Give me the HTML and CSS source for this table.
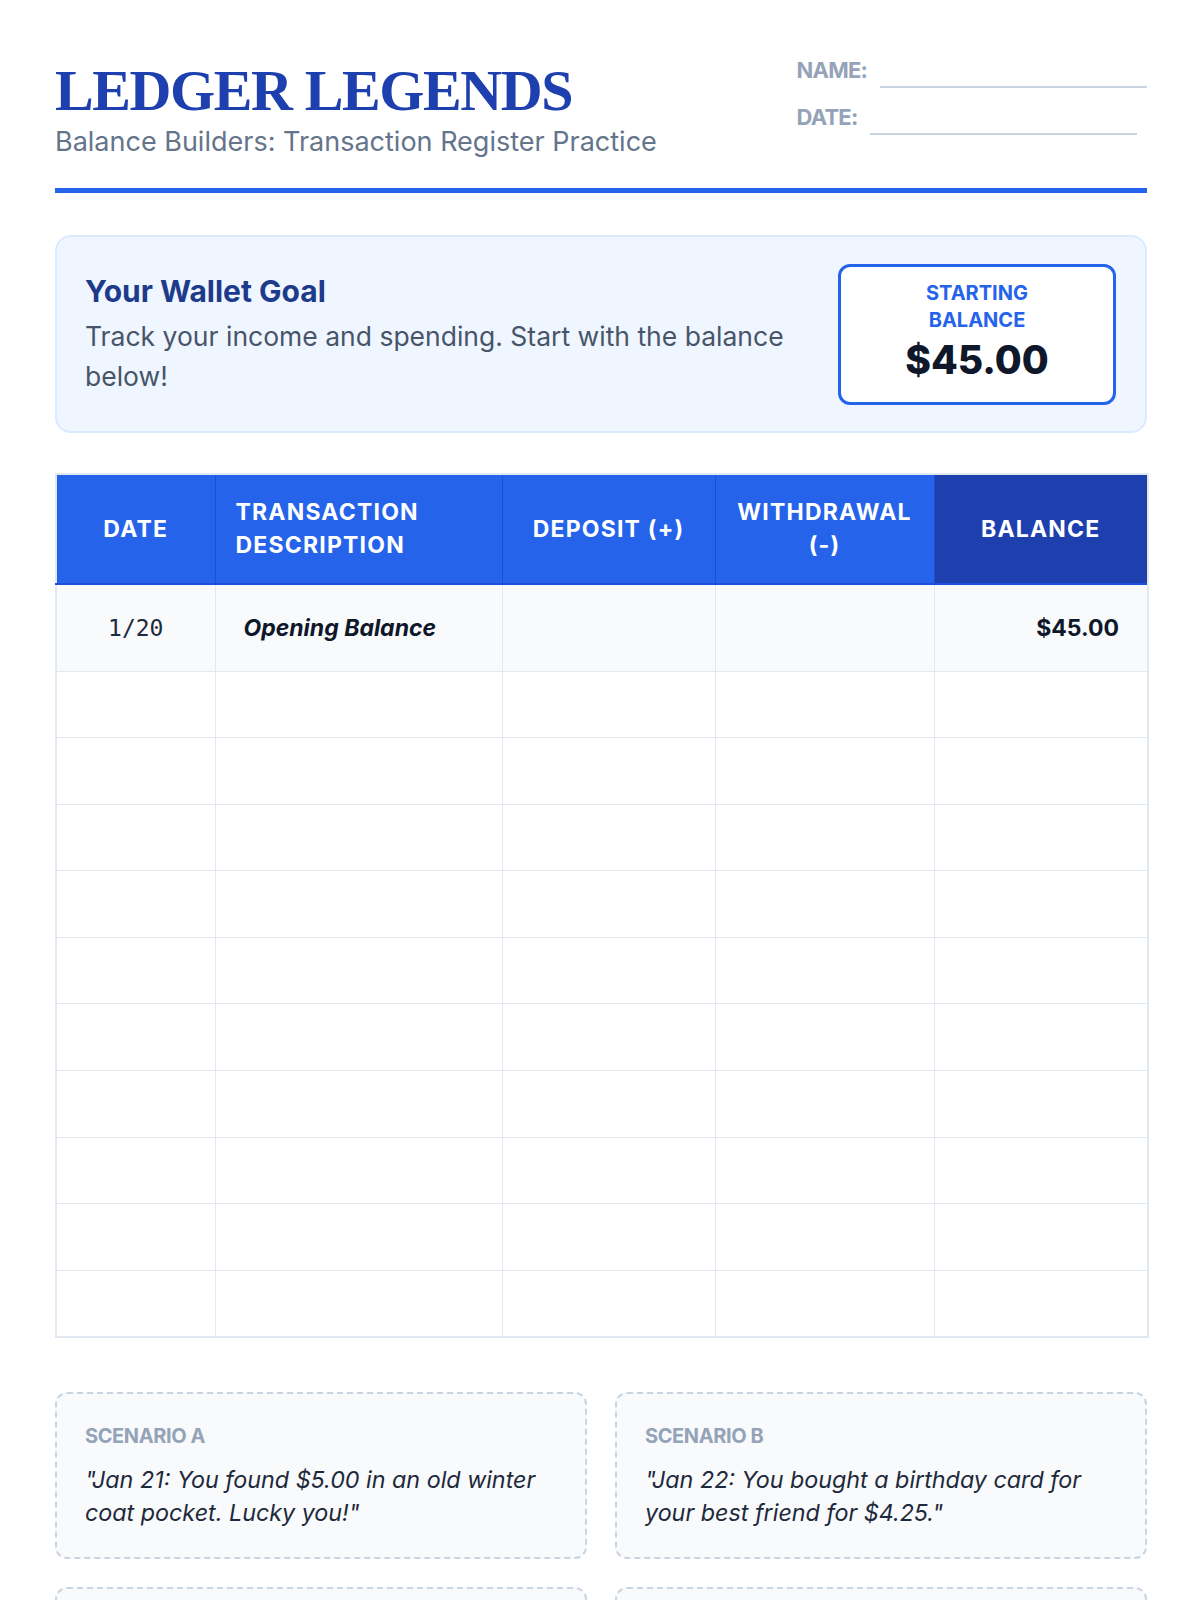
FILE: index.html
```html
<!DOCTYPE html>
<html lang="en">
<head>
<meta charset="utf-8">
<title>Ledger Legends</title>
<link rel="stylesheet" href="styles.css">
</head>
<body>
<div class="page">
  <header class="header">
    <div class="brand">
      <h1 class="title">LEDGER LEGENDS</h1>
      <p class="subtitle">Balance Builders: Transaction Register Practice</p>
    </div>
    <div class="fields">
      <div class="field"><span class="field-label">NAME:</span><span class="field-line"></span></div>
      <div class="field"><span class="field-label">DATE:</span><span class="field-line"></span></div>
    </div>
  </header>

  <section class="goal">
    <div class="goal-text">
      <h2 class="goal-title">Your Wallet Goal</h2>
      <p class="goal-desc">Track your income and spending. Start with the balance below!</p>
    </div>
    <div class="start-box">
      <div class="start-label">STARTING<br>BALANCE</div>
      <div class="start-amount">$45.00</div>
    </div>
  </section>

  <table class="register">
    <colgroup>
      <col class="c-date">
      <col class="c-desc">
      <col class="c-dep">
      <col class="c-wd">
      <col class="c-bal">
    </colgroup>
    <thead>
      <tr>
        <th class="th-center">DATE</th>
        <th class="th-left">TRANSACTION DESCRIPTION</th>
        <th class="th-center">DEPOSIT (+)</th>
        <th class="th-center">WITHDRAWAL (-)</th>
        <th class="th-center th-balance">BALANCE</th>
      </tr>
    </thead>
    <tbody>
      <tr class="row-first">
        <td class="td-date">1/20</td>
        <td class="td-desc">Opening Balance</td>
        <td></td>
        <td></td>
        <td class="td-bal">$45.00</td>
      </tr>
      <tr class="row-empty"><td></td><td></td><td></td><td></td><td></td></tr>
      <tr class="row-empty"><td></td><td></td><td></td><td></td><td></td></tr>
      <tr class="row-empty"><td></td><td></td><td></td><td></td><td></td></tr>
      <tr class="row-empty"><td></td><td></td><td></td><td></td><td></td></tr>
      <tr class="row-empty"><td></td><td></td><td></td><td></td><td></td></tr>
      <tr class="row-empty"><td></td><td></td><td></td><td></td><td></td></tr>
      <tr class="row-empty"><td></td><td></td><td></td><td></td><td></td></tr>
      <tr class="row-empty"><td></td><td></td><td></td><td></td><td></td></tr>
      <tr class="row-empty"><td></td><td></td><td></td><td></td><td></td></tr>
      <tr class="row-empty"><td></td><td></td><td></td><td></td><td></td></tr>
    </tbody>
  </table>

  <section class="scenarios">
    <div class="scenario">
      <div class="scenario-label">SCENARIO A</div>
      <p class="scenario-text">"Jan 21: You found $5.00 in an old winter coat pocket. Lucky you!"</p>
    </div>
    <div class="scenario">
      <div class="scenario-label">SCENARIO B</div>
      <p class="scenario-text">"Jan 22: You bought a birthday card for your best friend for $4.25."</p>
    </div>
    <div class="scenario">
      <div class="scenario-label">SCENARIO C</div>
      <p class="scenario-text">"Jan 23: You earned $12.00 for walking the neighbor's dog."</p>
    </div>
    <div class="scenario">
      <div class="scenario-label">SCENARIO D</div>
      <p class="scenario-text">"Jan 24: You spent $6.50 on a movie snack."</p>
    </div>
  </section>
</div>
</body>
</html>
```
FILE: styles.css
```css
* { box-sizing: border-box; }

html, body {
  margin: 0;
  padding: 0;
  background: #ffffff;
}

body {
  font-family: Inter, "Noto Sans", "Liberation Sans", sans-serif;
  color: #0f172a;
}

.page {
  padding: 60px 53px 40px 55px;
}

/* Header */
.header {
  display: flex;
  justify-content: space-between;
  align-items: flex-start;
  padding-bottom: 30px;
  border-bottom: 5px solid #2563eb;
}

.title {
  margin: 0;
  font-family: "Liberation Serif", "DejaVu Serif", serif;
  font-weight: 700;
  font-size: 58px;
  line-height: 62px;
  color: #1e40af;
  letter-spacing: -1.4px;
}

.subtitle {
  margin: 4px 0 0;
  font-size: 27px;
  line-height: 32px;
  color: #64748b;
}

.fields {
  display: flex;
  flex-direction: column;
  gap: 15px;
  margin-top: -6px;
}

.field {
  display: flex;
  align-items: flex-end;
  gap: 13px;
}

.field-label {
  font-size: 22px;
  line-height: 32px;
  font-weight: 700;
  color: #94a3b8;
  letter-spacing: -0.8px;
}

.field-line {
  width: 267px;
  height: 2px;
  background: #cbd5e1;
  margin-bottom: -2px;
}

/* Goal card */
.goal {
  margin-top: 42px;
  display: flex;
  justify-content: space-between;
  align-items: center;
  background: #eff6ff;
  border: 2px solid #dbeafe;
  border-radius: 16px;
  padding: 27px 29px 26px 28px;
}

.goal-text {
  max-width: 720px;
}

.goal-title {
  margin: 0;
  font-size: 30px;
  line-height: 36px;
  font-weight: 700;
  color: #1e3a8a;
}

.goal-desc {
  margin: 7px 0 0;
  font-size: 26.5px;
  line-height: 40px;
  color: #475569;
}

.start-box {
  width: 278px;
  background: #ffffff;
  border: 3px solid #2563eb;
  border-radius: 12px;
  padding: 13px 16px 16px;
  text-align: center;
}

.start-label {
  font-size: 20px;
  line-height: 27px;
  font-weight: 700;
  color: #2563eb;
}

.start-amount {
  font-size: 39px;
  line-height: 52px;
  font-weight: 800;
  color: #0f172a;
}

/* Register table */
.register {
  margin-top: 40px;
  width: 100%;
  border-collapse: collapse;
  table-layout: fixed;
  border: 2px solid #e2e8f0;
}

.c-date { width: 159px; }
.c-desc { width: 287px; }
.c-dep { width: 213px; }
.c-wd { width: 219px; }
.c-bal { width: 214px; }

.register th {
  background: #2563eb;
  color: #ffffff;
  font-size: 23px;
  line-height: 33px;
  font-weight: 700;
  letter-spacing: 1.2px;
  height: 110px;
  padding: 0 20px;
  border: 1px solid #1d4ed8;
  border-top: 2px solid #e2e8f0;
  vertical-align: middle;
}

.th-center { text-align: center; }
.th-left { text-align: left; }

.register th.th-balance {
  background: #1e40af;
  border-right: 2px solid #e2e8f0;
}

.register td {
  border: 1px solid #e2e8f0;
  padding: 0 28px;
  vertical-align: middle;
}

.row-first td {
  height: 87px;
  background: #f8fafc;
  border-top: 2px solid #1d4ed8;
}

.row-empty td {
  height: 66.6px;
}

.td-date {
  text-align: center;
  font-family: "DejaVu Sans Mono", "Liberation Mono", monospace;
  font-size: 23px;
  color: #1e293b;
}

.register td.td-date {
  padding: 0;
}

.td-desc {
  font-style: italic;
  font-weight: 700;
  font-size: 23px;
  color: #0f172a;
}

.td-bal {
  text-align: right;
  font-weight: 700;
  font-size: 23px;
  color: #0f172a;
}

/* Scenarios */
.scenarios {
  margin-top: 54px;
  display: grid;
  grid-template-columns: 1fr 1fr;
  gap: 28px;
}

.scenario {
  background: #f8fafc;
  border: 2px dashed #cbd5e1;
  border-radius: 12px;
  padding: 29px 28px 26px;
  min-height: 167px;
}

.scenario-label {
  font-size: 20px;
  line-height: 26px;
  font-weight: 700;
  color: #94a3b8;
  letter-spacing: -0.4px;
}

.scenario-text {
  margin: 14px 0 0;
  font-size: 23.3px;
  line-height: 33px;
  font-style: italic;
  color: #1e293b;
}
```
